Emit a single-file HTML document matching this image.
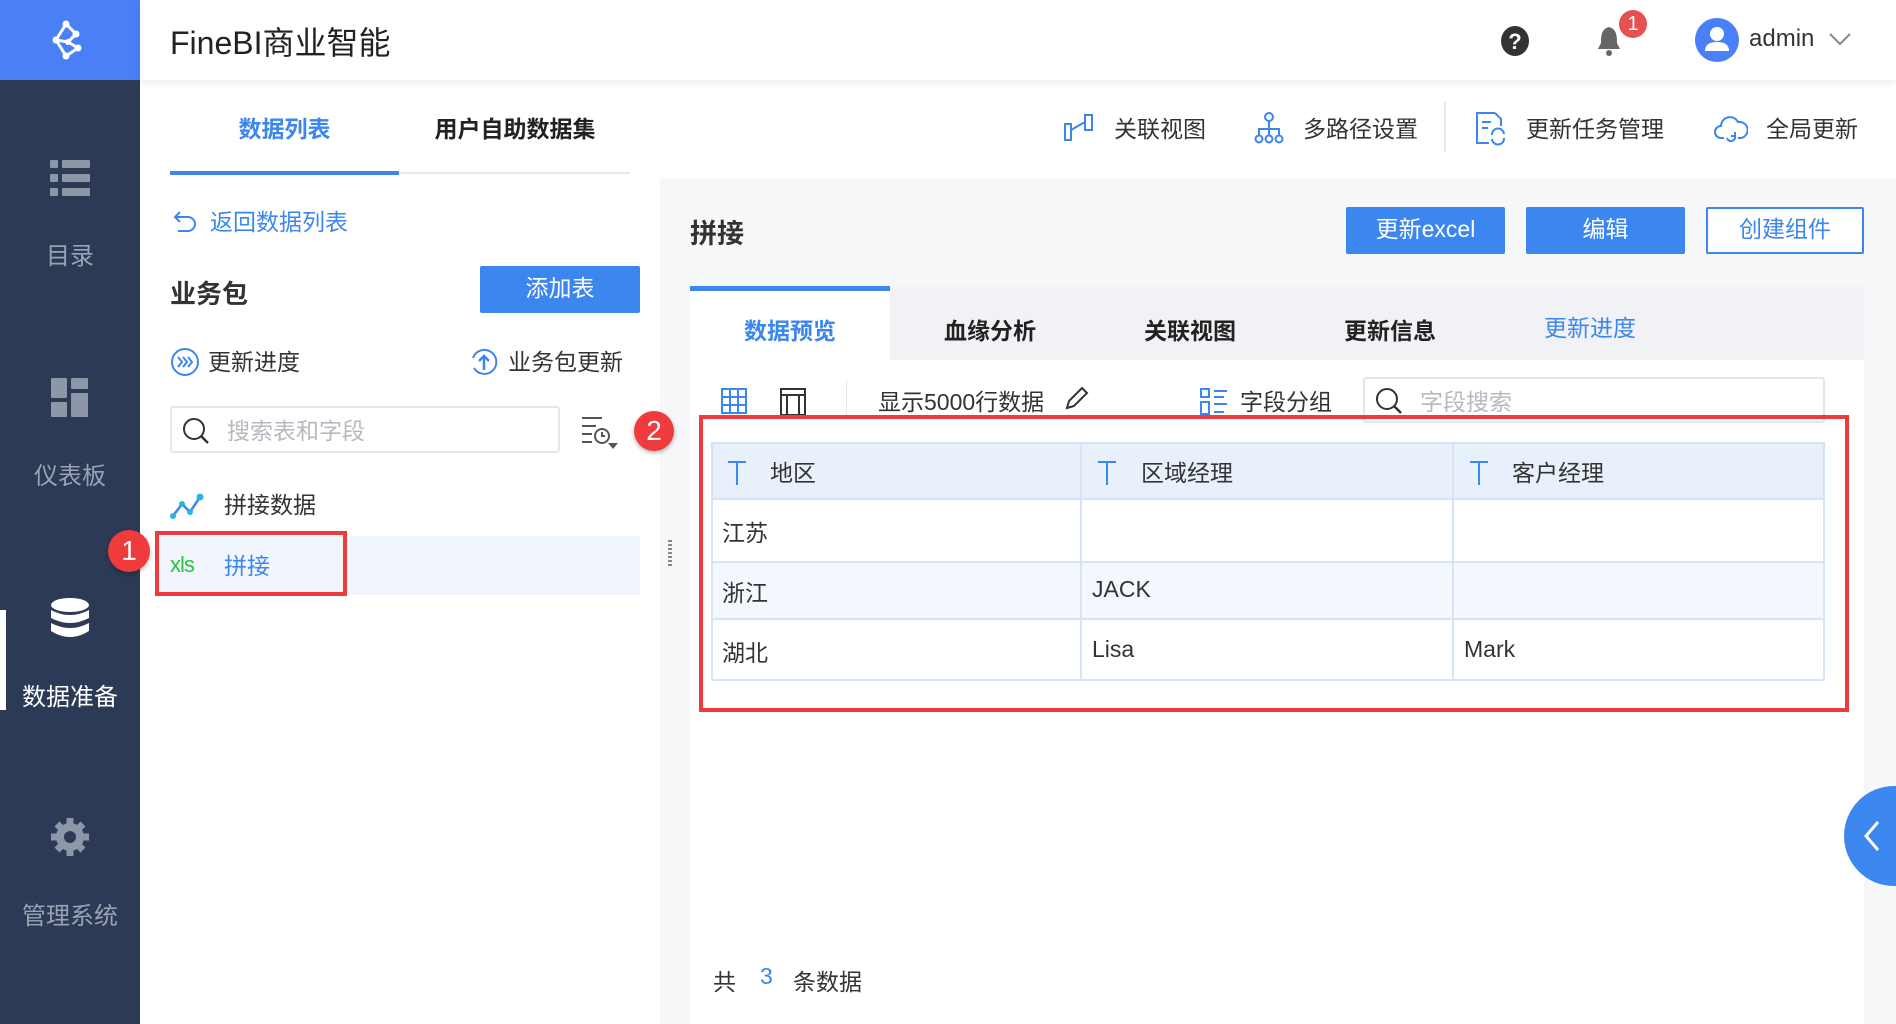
<!DOCTYPE html>
<html><head><meta charset="utf-8"><style>
*{margin:0;padding:0;box-sizing:border-box}
body{width:1896px;height:1024px;overflow:hidden;background:#fff;font-family:"Liberation Sans","Noto Sans CJK SC",sans-serif;color:#333;position:relative}
.a{position:absolute;white-space:nowrap}
.side{left:0;top:0;width:140px;height:1024px;background:#2c3a55}
.logo{left:0;top:0;width:140px;height:80px;background:#4a80f5}
.sl{width:140px;text-align:center;color:#9aa3b3;font-size:24px;margin-top:-4px}
.t22{font-size:23px;margin-top:-4px}
.blue{color:#3c86ef}
.btn{background:#3c86ef;color:#fff;font-size:23px;text-align:center;border-radius:2px}
.cell{position:absolute;font-size:23px;color:#333;margin-top:-4px}
</style></head><body>
<div class="a side"></div>
<div class="a logo"></div>
<svg class="a" style="left:48px;top:20px" width="42" height="40" viewBox="0 0 42 40"><g stroke="#fff" stroke-width="3" fill="none"><path d="M18 4 L8 20 L18 36 M18 4 L28 14 L20 22 L30 28 L18 36 M8 20 L20 22"/></g><g fill="#fff"><circle cx="18" cy="4" r="3.5"/><circle cx="8" cy="20" r="3.5"/><circle cx="28" cy="14" r="3.5"/><circle cx="30" cy="28" r="3.5"/><circle cx="18" cy="36" r="3.5"/><circle cx="20" cy="22" r="3"/></g></svg>
<svg class="a" style="left:50px;top:160px" width="40" height="36"><g fill="#8e97a8"><rect x="0" y="0" width="8" height="8" rx="1"/><rect x="12" y="0" width="28" height="8" rx="1"/><rect x="0" y="14" width="8" height="8" rx="1"/><rect x="12" y="14" width="28" height="8" rx="1"/><rect x="0" y="28" width="8" height="8" rx="1"/><rect x="12" y="28" width="28" height="8" rx="1"/></g></svg>
<div class="a sl" style="left:0;top:240px">目录</div>
<svg class="a" style="left:51px;top:378px" width="38" height="40"><g fill="#8e97a8"><rect x="0" y="0" width="16" height="20" rx="1"/><rect x="20" y="0" width="17" height="11" rx="1"/><rect x="0" y="24" width="16" height="15" rx="1"/><rect x="20" y="15" width="17" height="24" rx="1"/></g></svg>
<div class="a sl" style="left:0;top:460px">仪表板</div>
<div class="a" style="left:0;top:610px;width:6px;height:100px;background:#fff"></div>
<svg class="a" style="left:50px;top:598px" width="40" height="42"><g fill="#fff"><ellipse cx="20" cy="7" rx="19" ry="7"/><path d="M1 12 Q20 22 39 12 V20 Q20 30 1 20Z"/><path d="M1 25 Q20 35 39 25 V33 Q20 45 1 33Z"/></g></svg>
<div class="a sl" style="left:0;top:681px;color:#fff">数据准备</div>
<svg class="a" style="left:49px;top:816px" width="42" height="42" viewBox="0 0 42 42"><g fill="#8e97a8"><circle cx="21" cy="21" r="14"/><g stroke="#8e97a8" stroke-width="7"><path d="M21 2V40M2 21H40M8 8L34 34M34 8L8 34"/></g></g><circle cx="21" cy="21" r="6" fill="#2c3a55"/></svg>
<div class="a sl" style="left:0;top:900px">管理系统</div>
<div class="a" style="left:140px;top:0;width:1756px;height:80px;background:#fff;box-shadow:0 3px 8px rgba(0,0,0,.08)"></div>
<div class="a" style="left:170px;top:18px;font-size:32px;color:#222">FineBI商业智能</div>
<svg class="a" style="left:1500px;top:25px" width="30" height="32"><ellipse cx="15" cy="16" rx="14" ry="15" fill="#333"/><text x="15" y="24" font-size="22" font-weight="bold" fill="#fff" text-anchor="middle" font-family="Liberation Sans">?</text></svg>
<svg class="a" style="left:1596px;top:25px" width="26" height="32"><path d="M13 2 C5 4 5 12 5 18 L2 24 H24 L21 18 C21 12 21 4 13 2Z" fill="#666"/><circle cx="13" cy="28" r="3" fill="#666"/></svg>
<div class="a" style="left:1619px;top:10px;width:28px;height:28px;border-radius:50%;background:#e55050;color:#fff;font-size:20px;text-align:center;line-height:28px">1</div>
<svg class="a" style="left:1695px;top:18px" width="44" height="44"><circle cx="22" cy="22" r="22" fill="#4a80f5"/><circle cx="22" cy="16" r="7" fill="#fff"/><path d="M10 33 Q10 24 22 24 Q34 24 34 33Z" fill="#fff"/></svg>
<div class="a" style="left:1749px;top:25px;font-size:24px;color:#333">admin</div>
<svg class="a" style="left:1828px;top:32px" width="24" height="14"><path d="M2 2 L12 12 L22 2" stroke="#888" stroke-width="2" fill="none"/></svg>
<div class="a t22 blue" style="left:170px;top:114px;width:229px;text-align:center;font-weight:bold">数据列表</div>
<div class="a t22" style="left:400px;top:114px;width:230px;text-align:center;font-weight:bold;color:#222">用户自助数据集</div>
<div class="a" style="left:170px;top:172px;width:460px;height:2px;background:#e6e8ec"></div>
<div class="a" style="left:170px;top:171px;width:229px;height:4px;background:#3c86ef"></div>
<svg class="a" style="left:1064px;top:114px" width="30" height="28"><g stroke="#3c86ef" stroke-width="2" fill="none"><rect x="1" y="10" width="6" height="16"/><rect x="21" y="1" width="7" height="15"/><path d="M7 16 L21 8"/></g></svg>
<div class="a t22" style="left:1114px;top:114px">关联视图</div>
<svg class="a" style="left:1254px;top:112px" width="30" height="32"><g stroke="#3c86ef" stroke-width="2" fill="none"><circle cx="15" cy="5" r="4"/><circle cx="5" cy="27" r="3.5"/><circle cx="15" cy="27" r="3.5"/><circle cx="25" cy="27" r="3.5"/><path d="M15 9V23M5 23V17H25V23"/></g></svg>
<div class="a t22" style="left:1303px;top:114px">多路径设置</div>
<div class="a" style="left:1444px;top:102px;width:2px;height:50px;background:#e6e8ec"></div>
<svg class="a" style="left:1475px;top:112px" width="32" height="34"><g stroke="#3c86ef" stroke-width="2" fill="none"><path d="M20 1H2V31H14M20 1L26 7V14"/><path d="M7 10H16M7 16H13"/><path d="M17 23 A6 6 0 0 1 29 22 M29 26 A6 6 0 0 1 17 27"/></g></svg>
<div class="a t22" style="left:1526px;top:114px">更新任务管理</div>
<svg class="a" style="left:1714px;top:114px" width="34" height="28"><g stroke="#3c86ef" stroke-width="2" fill="none"><path d="M10 24 H7 A6 6 0 0 1 7 12 A9 9 0 0 1 24 8 A7 7 0 0 1 27 24 H24"/><path d="M13 24 A4 4 0 0 0 21 22 M21 18 L21 22 L17 22"/></g></svg>
<div class="a t22" style="left:1766px;top:114px">全局更新</div>
<svg class="a" style="left:172px;top:210px" width="26" height="22"><path d="M3 7 H16 A7 7 0 0 1 16 21 H6 M8 2 L3 7 L8 12" stroke="#3c86ef" stroke-width="2" fill="none"/></svg>
<div class="a t22 blue" style="left:210px;top:207px">返回数据列表</div>
<div class="a" style="left:170px;top:274px;font-size:26px;font-weight:bold;color:#333">业务包</div>
<div class="a btn" style="left:480px;top:266px;width:160px;height:47px;line-height:45px">添加表</div>
<svg class="a" style="left:170px;top:347px" width="30" height="30"><circle cx="15" cy="15" r="13" stroke="#3c86ef" stroke-width="2" fill="none"/><path d="M8 10 L12 15 L8 20 M13 10 L17 15 L13 20 M18 10 L22 15 L18 20" stroke="#3c86ef" stroke-width="2" fill="none"/></svg>
<div class="a t22" style="left:208px;top:347px">更新进度</div>
<svg class="a" style="left:468px;top:346px" width="32" height="32"><path d="M5 12 A12 12 0 1 1 6 22" stroke="#3c86ef" stroke-width="2" fill="none"/><path d="M16 24 V10 M11 15 L16 10 L21 15" stroke="#3c86ef" stroke-width="2.5" fill="none"/></svg>
<div class="a t22" style="left:508px;top:347px">业务包更新</div>
<div class="a" style="left:170px;top:406px;width:390px;height:47px;border:2px solid #e4e6ea;border-radius:3px"></div>
<svg class="a" style="left:181px;top:416px" width="30" height="30"><circle cx="13" cy="13" r="10" stroke="#333" stroke-width="2" fill="none"/><path d="M20 20 L27 27" stroke="#333" stroke-width="2.5"/></svg>
<div class="a t22" style="left:227px;top:416px;color:#b5b9c1">搜索表和字段</div>
<svg class="a" style="left:580px;top:416px" width="40" height="34"><g stroke="#555" stroke-width="2" fill="none"><path d="M2 2H22M2 10H16M2 18H12M2 26H12"/><circle cx="22" cy="20" r="7"/><path d="M22 16V20H25"/></g><path d="M28 27 H38 L33 33Z" fill="#555"/></svg>
<svg class="a" style="left:170px;top:492px" width="34" height="28"><path d="M3 24 L12 12 L20 20 L30 5" stroke="#3c86ef" stroke-width="2.5" fill="none"/><g fill="#25b5e8"><circle cx="3" cy="24" r="3"/><circle cx="12" cy="12" r="3"/><circle cx="20" cy="20" r="3"/><circle cx="30" cy="5" r="3.5"/></g></svg>
<div class="a t22" style="left:224px;top:490px">拼接数据</div>
<div class="a" style="left:155px;top:536px;width:485px;height:59px;background:#f1f5fc"></div>
<div class="a" style="left:155px;top:531px;width:192px;height:65px;border:4px solid #ef3b3b"></div>
<div class="a" style="left:170px;top:552px;font-size:22px;color:#2cc240;letter-spacing:-1px">xls</div>
<div class="a t22 blue" style="left:224px;top:551px">拼接</div>
<div class="a" style="left:108px;top:530px;width:42px;height:42px;border-radius:50%;background:#ef3b3b;color:#fff;font-size:28px;text-align:center;line-height:42px;box-shadow:0 2px 4px rgba(0,0,0,.3)">1</div>
<div class="a" style="left:660px;top:178px;width:1236px;height:846px;background:#f6f7f9"></div>
<div class="a" style="left:668px;top:540px;width:3px;height:26px;border-left:2px dotted #888;border-right:2px dotted #888"></div>
<div class="a" style="left:690px;top:212px;font-size:27px;font-weight:bold;color:#333">拼接</div>
<div class="a btn" style="left:1346px;top:207px;width:159px;height:47px;line-height:45px">更新excel</div>
<div class="a btn" style="left:1526px;top:207px;width:159px;height:47px;line-height:45px">编辑</div>
<div class="a btn" style="left:1706px;top:207px;width:158px;height:47px;line-height:41px;background:#fff;color:#3c86ef;border:2px solid #3c86ef">创建组件</div>
<div class="a" style="left:690px;top:287px;width:1174px;height:737px;background:#fff"></div>
<div class="a" style="left:890px;top:287px;width:974px;height:73px;background:#f0f2f5"></div>
<div class="a" style="left:690px;top:286px;width:200px;height:5px;background:#3c86ef"></div>
<div class="a t22 blue" style="left:690px;top:316px;width:200px;text-align:center;font-weight:bold">数据预览</div>
<div class="a t22" style="left:890px;top:316px;width:200px;text-align:center;font-weight:bold;color:#222">血缘分析</div>
<div class="a t22" style="left:1090px;top:316px;width:200px;text-align:center;font-weight:bold;color:#222">关联视图</div>
<div class="a t22" style="left:1290px;top:316px;width:200px;text-align:center;font-weight:bold;color:#222">更新信息</div>
<div class="a t22 blue" style="left:1490px;top:313px;width:200px;text-align:center">更新进度</div>
<svg class="a" style="left:721px;top:388px" width="26" height="26"><g stroke="#3c86ef" stroke-width="2" fill="none"><rect x="1" y="1" width="24" height="24"/><path d="M1 9H25M1 17H25M9 1V25M17 1V25"/></g></svg>
<svg class="a" style="left:780px;top:388px" width="26" height="28"><g stroke="#333" stroke-width="2" fill="none"><rect x="1" y="1" width="24" height="26"/><path d="M1 7H25M7 7V27M19 7V27"/></g></svg>
<div class="a" style="left:846px;top:380px;width:1px;height:40px;background:#e6e8ec"></div>
<div class="a t22" style="left:878px;top:387px">显示5000行数据</div>
<svg class="a" style="left:1063px;top:386px" width="26" height="26"><path d="M4 22 L6 15 L19 2 L24 7 L11 20Z M4 22 L11 20" stroke="#333" stroke-width="2" fill="none"/></svg>
<svg class="a" style="left:1200px;top:388px" width="28" height="28"><g stroke="#3c86ef" stroke-width="2" fill="none"><rect x="1" y="1" width="8" height="8"/><rect x="1" y="14" width="8" height="12"/><path d="M14 3H27M14 9H24M14 16H27M14 24H24"/></g></svg>
<div class="a t22" style="left:1240px;top:387px">字段分组</div>
<div class="a" style="left:1363px;top:377px;width:462px;height:46px;border:2px solid #e4e6ea;border-radius:3px"></div>
<svg class="a" style="left:1374px;top:386px" width="30" height="30"><circle cx="13" cy="13" r="10" stroke="#333" stroke-width="2" fill="none"/><path d="M20 20 L27 27" stroke="#333" stroke-width="2.5"/></svg>
<div class="a t22" style="left:1420px;top:387px;color:#b5b9c1">字段搜索</div>
<div class="a" style="left:711px;top:442px;width:1114px;height:239px;border:2px solid #d6e4f7;background:#fff"></div>
<div class="a" style="left:713px;top:444px;width:1110px;height:56px;background:#e8f0fc;border-bottom:2px solid #d6e4f7"></div>
<div class="a" style="left:713px;top:561px;width:1110px;height:59px;background:#f4f7fd;border-top:2px solid #d6e4f7;border-bottom:2px solid #d6e4f7"></div>
<div class="a" style="left:1080px;top:444px;width:2px;height:235px;background:#d6e4f7"></div>
<div class="a" style="left:1452px;top:444px;width:2px;height:235px;background:#d6e4f7"></div>
<svg class="a" style="left:727px;top:460px" width="20" height="26"><path d="M1 2H19M10 2V25" stroke="#3c86ef" stroke-width="2" fill="none"/></svg>
<svg class="a" style="left:1097px;top:460px" width="20" height="26"><path d="M1 2H19M10 2V25" stroke="#3c86ef" stroke-width="2" fill="none"/></svg>
<svg class="a" style="left:1469px;top:460px" width="20" height="26"><path d="M1 2H19M10 2V25" stroke="#3c86ef" stroke-width="2" fill="none"/></svg>
<div class="cell" style="left:770px;top:458px">地区</div>
<div class="cell" style="left:1141px;top:458px">区域经理</div>
<div class="cell" style="left:1512px;top:458px">客户经理</div>
<div class="cell" style="left:722px;top:518px">江苏</div>
<div class="cell" style="left:722px;top:578px">浙江</div><div class="cell" style="left:1092px;top:580px">JACK</div>
<div class="cell" style="left:722px;top:638px">湖北</div><div class="cell" style="left:1092px;top:640px">Lisa</div><div class="cell" style="left:1464px;top:640px">Mark</div>
<div class="a" style="left:699px;top:415px;width:1150px;height:297px;border:4px solid #ef3b3b"></div>
<div class="a" style="left:634px;top:411px;width:40px;height:40px;border-radius:50%;background:#ef3b3b;color:#fff;font-size:28px;text-align:center;line-height:40px;box-shadow:0 2px 4px rgba(0,0,0,.3)">2</div>
<div class="a t22" style="left:713px;top:967px">共</div>
<div class="a t22 blue" style="left:760px;top:967px">3</div>
<div class="a t22" style="left:793px;top:967px">条数据</div>
<div class="a" style="left:1844px;top:786px;width:100px;height:100px;border-radius:50%;background:#3c86ef"></div>
<svg class="a" style="left:1862px;top:820px" width="20" height="32"><path d="M16 2 L4 16 L16 30" stroke="#fff" stroke-width="3" fill="none"/></svg>
</body></html>
